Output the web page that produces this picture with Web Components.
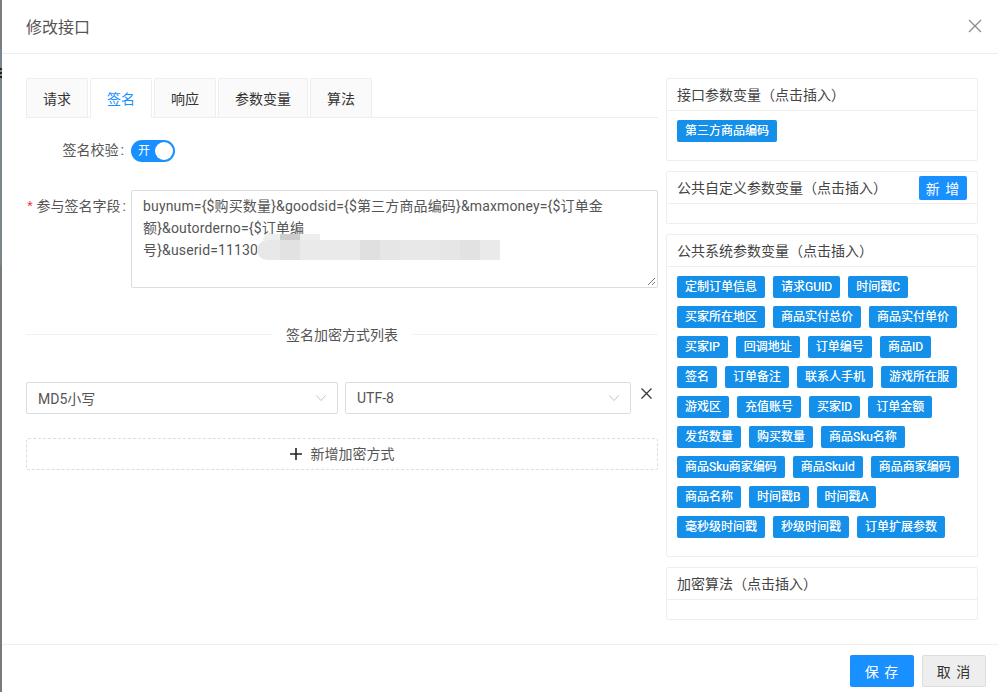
<!DOCTYPE html>
<html lang="zh"><head><meta charset="utf-8">
<style>
html,body{margin:0;padding:0;width:998px;height:692px;overflow:hidden;font-family:Roboto,"Noto Sans CJK SC",sans-serif;color:#333}
body{background:linear-gradient(180deg,#7c7c7c 0 49px,#5f8bab 49px 50px,#7b868b 50px 68px,#2a2a2a 68px 70px,#7b868b 70px 72px,#222 72px 74px,#7b868b 74px 76px,#222 76px 78px,#7b868b 78px 98px,#5f8bab 98px 99px,#7b868b 99px 265px,#7a7a7a 265px)}
</style></head><body>
<script>
const FONT='Roboto,"Noto Sans CJK SC",sans-serif';
function def(name,html){customElements.define(name,class extends HTMLElement{
  connectedCallback(){if(this.shadowRoot)return;const r=this.attachShadow({mode:'open'});r.innerHTML=typeof html==='function'?html(this):html;}
});}
def('var-tag',`<style>:host{display:inline-flex;align-items:center;box-sizing:border-box;height:22px;padding:1px 8px 0;background:#1590ea;color:#fff;border-radius:2px;font-size:12px;line-height:21px;white-space:nowrap;text-shadow:0 0 .5px rgba(255,255,255,.8)}</style><slot></slot>`);
def('var-card',el=>`<style>:host{display:block;border:1px solid #eee;border-radius:2px;background:#fff}
.h{display:flex;align-items:center;justify-content:space-between;height:31px;padding:0 10px;border-bottom:1px solid #eee;font-size:14px;color:#444}
.h span{padding-bottom:2px}
.b{display:flex;flex-wrap:wrap;gap:8px;padding:${el.getAttribute('pad')||'0 10px'};min-height:${el.getAttribute('min')||'19'}px;align-content:flex-start}
::slotted([slot=act]){margin-top:1px}</style>
<div class="h"><span>${el.getAttribute('title')}</span><slot name="act"></slot></div><div class="b"><slot></slot></div>`);
def('ui-btn',el=>`<style>:host{display:inline-flex;align-items:center;justify-content:center;box-sizing:border-box;padding-bottom:1px;width:${el.getAttribute('w')||64}px;height:${el.getAttribute('h')||32}px;border-radius:2px;font-size:14px;letter-spacing:1px;white-space:pre;background:${el.hasAttribute('ghost')?'#eee':'#1890ff'};color:${el.hasAttribute('ghost')?'#333':'#fff'};${el.hasAttribute('ghost')?'border:1px solid #ddd;':''}}</style><slot></slot>`);
def('tab-bar',`<style>:host{display:flex;gap:2px;height:40px;box-sizing:border-box;border-bottom:1px solid #eee;font-size:14px}</style><slot></slot>`);
def('tab-item',el=>`<style>:host{display:flex;box-sizing:border-box;align-items:center;justify-content:center;height:40px;width:${el.getAttribute('w')||62}px;border:1px solid #eee;border-radius:2px 2px 0 0;background:${el.hasAttribute('on')?'#fff':'#fafafa'};color:${el.hasAttribute('on')?'#1890ff':'#333'};${el.hasAttribute('on')?'border-bottom-color:#fff;':'border-bottom:0;height:39px;'}}</style><slot></slot>`);
def('ui-select',`<style>:host{display:flex;align-items:center;justify-content:space-between;box-sizing:border-box;height:32px;border:1px solid #ddd;border-radius:2px;padding:0 11px;font-size:14px;color:#555;background:#fff}
svg{display:block}</style><slot></slot><svg width="10" height="6" viewBox="0 0 10 6"><path d="M.4.4L5 5.6 9.6.4" fill="none" stroke="#c4c4c4"/></svg>`);
def('sign-form',`<style>
:host{display:flex;flex-direction:column;font-size:14px;color:#555}
.row{display:flex}
.lab{width:105px;flex:none;display:flex;justify-content:flex-end;font-size:14px;color:#555;white-space:nowrap}
.lab:after{content:":";margin:0 var(--m,8px) 0 2px}
.req{color:#f5222d;margin-right:4px;font-family:"Liberation Sans",sans-serif}
.sw{position:relative;width:44px;height:22px;border-radius:11px;background:#1890ff;color:#fff;font-size:12px;line-height:22px;padding-left:7px;box-sizing:border-box}
.sw i{position:absolute;right:2px;top:2px;width:18px;height:18px;border-radius:50%;background:#fff}
.ta{position:relative;flex:1;box-sizing:border-box;height:98px;border:1px solid #ddd;border-radius:2px;padding:4px 11px 0;font-size:14px;line-height:22px;color:#555;white-space:nowrap;letter-spacing:.15px}
.ta svg{position:absolute;right:1px;bottom:1px}
.blur{position:absolute;left:125px;top:49px;width:243px;height:20px;border-radius:10px 0 0 10px;background:linear-gradient(90deg,#e8e8e8 0 23px,#e2e2e2 23px 43px,#eaeaea 43px 103px,#e0e0e0 103px 123px,#e6e6e6 123px 143px,#e8e8e8 143px 183px,#e6e6e6 183px 203px,#e2e2e2 203px 223px,#eaeaea 223px)}
.blur2{position:absolute;left:131px;top:43px;width:57px;height:6px;border-radius:6px 0 0 0;background:linear-gradient(90deg,#eee 0 17px,#ccc 17px 37px,#eee 37px)}
.div{display:flex;align-items:center;gap:14px;height:20px;margin-top:36px;font-size:14px;color:#555;white-space:nowrap}
.div:before,.div:after{content:"";flex:1;height:1px;background:#f2f2f2}
.sel{display:flex;gap:7px;margin-top:38px;height:32px}
.x{width:17px;display:flex;justify-content:center;padding-top:6px}
.add{display:flex;align-items:center;justify-content:center;gap:8px;height:32px;box-sizing:border-box;border:1px dashed #ddd;border-radius:2px;margin-top:24px;font-size:14px;color:#555}
.add span{padding-bottom:2px}
</style>
<div class="row" style="margin-top:22px;height:22px;align-items:center"><div class="lab" style="line-height:22px;padding-bottom:2px;--m:7px">签名校验</div><div class="sw">开<i></i></div></div>
<div class="row" style="margin-top:28px"><div class="lab" style="line-height:32px;--m:5px"><span class="req">*</span>参与签名字段</div>
<div class="ta">buynum={$购买数量}&amp;goodsid={$第三方商品编码}&amp;maxmoney={$订单金<br>额}&amp;outorderno={$订单编<br>号}&amp;userid=11130<span class="blur"></span><span class="blur2"></span>
<svg width="10" height="10" viewBox="0 0 10 10"><path d="M9 2L2 9M9 6L6 9" stroke="#777" fill="none"/></svg></div></div>
<div class="div">签名加密方式列表</div>
<div class="sel"><ui-select style="flex:0 0 312px">MD5小写</ui-select><ui-select style="flex:0 0 286px">UTF-8</ui-select><div class="x"><svg width="11" height="11" viewBox="0 0 11 11"><path d="M.5.5l10 10M10.5.5l-10 10" stroke="#333" stroke-width="1.2" fill="none"/></svg></div></div>
<div class="add"><svg width="12" height="12" viewBox="0 0 12 12" style="margin-right:1px"><path d="M6 0v12M0 6h12" stroke="#222" stroke-width="1.6"/></svg><span>新增加密方式</span></div>`);
def('app-modal',`<style>
:host{display:flex;flex-direction:column;box-sizing:border-box;width:996px;height:692px;margin-left:2px;background:#fff;color:#333;font-family:${FONT}}
header{display:flex;align-items:center;justify-content:space-between;height:54px;flex:none;box-sizing:border-box;border-bottom:1px solid #eee;padding:0 16px 1px 24px;font-size:16px;color:#555}
main{flex:1;display:flex;gap:8px;padding:24px 20px 0 24px;min-height:0}
.l{width:632px;flex:none}
.r{width:312px;flex:none;display:flex;flex-direction:column;gap:10px}
footer{height:48px;flex:none;box-sizing:border-box;border-top:1px solid #eee;display:flex;justify-content:flex-end;gap:8px;padding:10px 12px 0 0;}
</style>
<header><span>修改接口</span><svg width="14" height="14" viewBox="0 0 14 14"><path d="M1 1l12 12M13 1L1 13" stroke="#8c8c8c" stroke-width="1.3" fill="none"/></svg></header>
<main><div class="l"><tab-bar><tab-item>请求</tab-item><tab-item on>签名</tab-item><tab-item>响应</tab-item><tab-item w="90">参数变量</tab-item><tab-item>算法</tab-item></tab-bar><sign-form></sign-form></div>
<div class="r"><slot></slot></div></main>
<footer><ui-btn>保 存</ui-btn><ui-btn ghost>取 消</ui-btn></footer>`);
const sys=['定制订单信息','请求GUID','时间戳C','买家所在地区','商品实付总价','商品实付单价','买家IP','回调地址','订单编号','商品ID','签名','订单备注','联系人手机','游戏所在服','游戏区','充值账号','买家ID','订单金额','发货数量','购买数量','商品Sku名称','商品Sku商家编码','商品SkuId','商品商家编码','商品名称','时间戳B','时间戳A','毫秒级时间戳','秒级时间戳','订单扩展参数'];
const t=a=>a.map(s=>`<var-tag>${s}</var-tag>`).join('');
const m=document.createElement('app-modal');
m.innerHTML=`<var-card title="接口参数变量（点击插入）" pad="9px 10px 18px">${t(['第三方商品编码'])}</var-card>
<var-card title="公共自定义参数变量（点击插入）" min="19"><ui-btn slot="act" w="48" h="24">新 增</ui-btn></var-card>
<var-card title="公共系统参数变量（点击插入）" pad="9px 10px 18px">${t(sys)}</var-card>
<var-card title="加密算法（点击插入）" min="19"></var-card>`;
document.body.appendChild(m);
</script>
</body></html>
